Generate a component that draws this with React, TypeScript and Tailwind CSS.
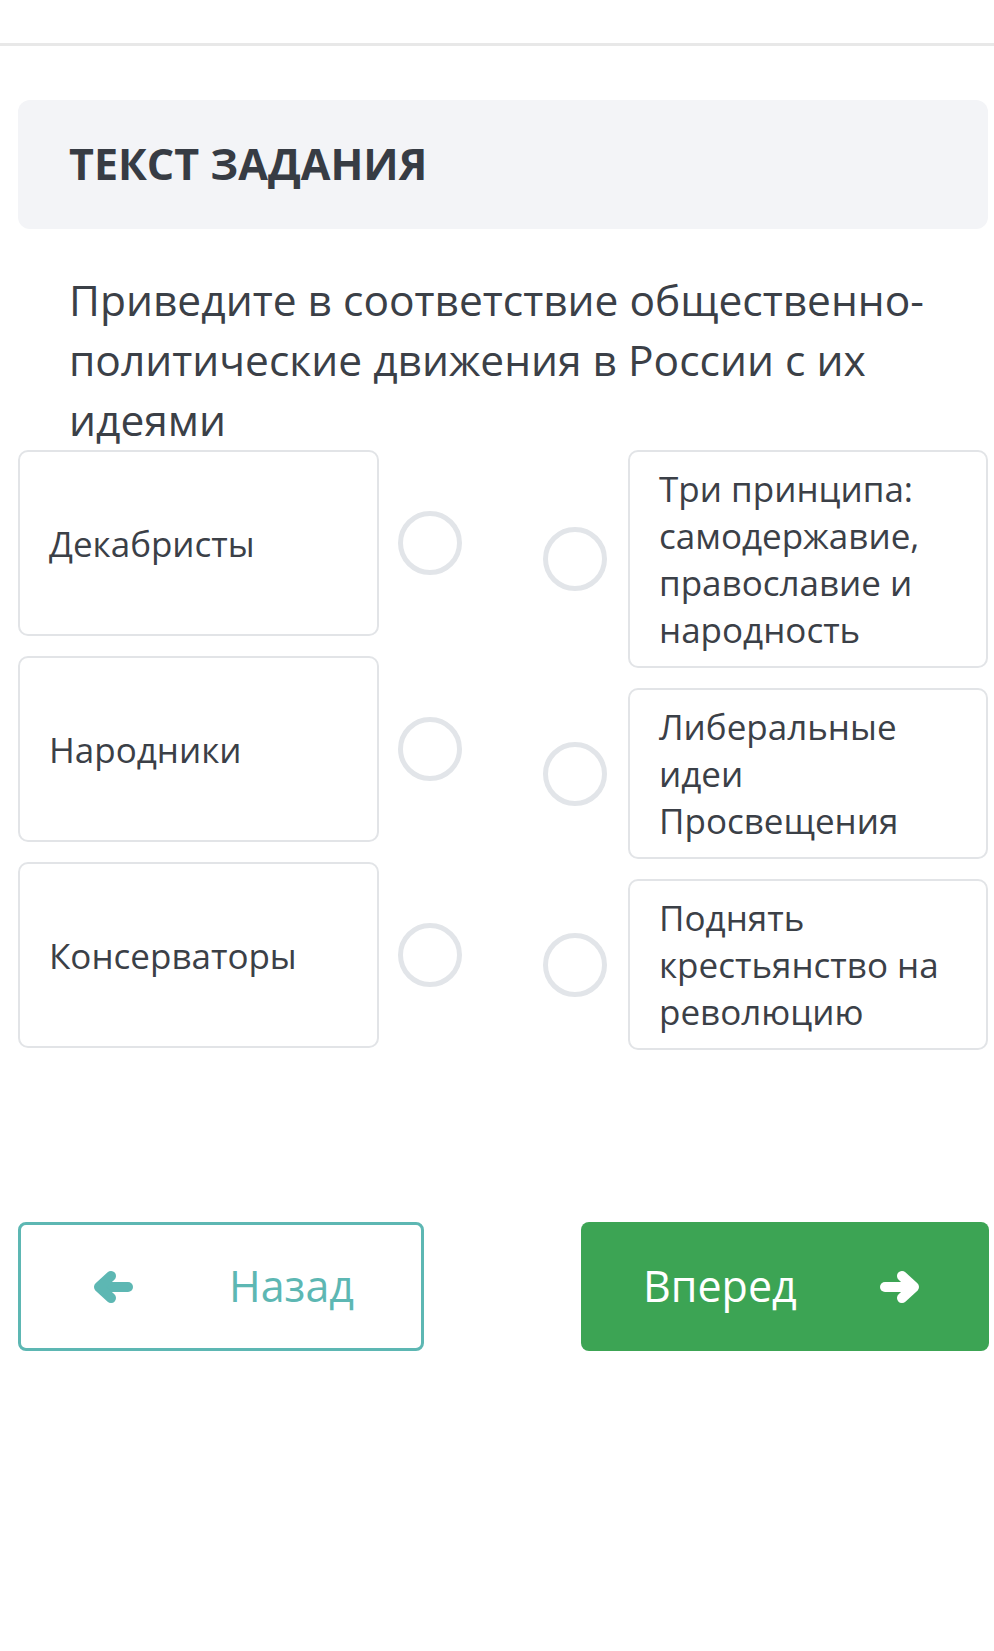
const left = ['Декабристы', 'Народники', 'Консерваторы'];

const right = [
  'Три принципа: самодержавие, православие и народность',
  'Либеральные идеи Просвещения',
  'Поднять крестьянство на революцию',
];

function Dot() {
  return <div className="h-[64px] w-[64px] shrink-0 rounded-full border-[5px] border-[#e2e5e9]" />;
}

// thick rounded arrow, points left unless flipped
function Arrow({ flip }: { flip?: boolean }) {
  return (
    <svg
      width="42"
      height="34"
      viewBox="0 0 42 34"
      fill="none"
      stroke="currentColor"
      strokeWidth="10"
      strokeLinecap="round"
      strokeLinejoin="round"
      className={flip ? '-scale-x-100' : ''}
    >
      <path d="M36 17H9" />
      <path d="M19 6L7 17L19 28" />
    </svg>
  );
}

export default function App() {
  return (
    <div className="min-h-[1651px] bg-white font-['Open_Sans',sans-serif] text-[#3b4047]">
      <div className="h-[46px] border-b-[3px] border-[#e8e8e8]" />

      <div className="px-[18px] pt-[54px]">
        {/* Header */}
        <div className="flex h-[129px] w-[970px] items-center rounded-xl bg-[#f3f4f7] px-[51px]">
          <h1 className="text-[43px] font-bold text-[#373c44]">ТЕКСТ ЗАДАНИЯ</h1>
        </div>

        {/* Question */}
        <p className="mt-[41px] px-[51px] text-[42.5px] leading-[60px]">
          Приведите в соответствие общественно-политические движения в России с их идеями
        </p>

        {/* Matching */}
        <div className="flex w-[970px] justify-between">
          <div className="flex flex-col gap-[20px]">
            {left.map((t) => (
              <div key={t} className="flex items-center gap-[19px]">
                <div className="flex h-[186px] w-[361px] items-center rounded-[10px] border-2 border-[#e2e4e7] px-[29px] text-[35px] leading-[47px]">
                  {t}
                </div>
                <Dot />
              </div>
            ))}
          </div>
          <div className="flex flex-col gap-[20px]">
            {right.map((t) => (
              <div key={t} className="flex items-center gap-[21px]">
                <Dot />
                <div className="w-[360px] rounded-[10px] border-2 border-[#e2e4e7] px-[29px] py-[13px] text-[35px] leading-[47px]">
                  {t}
                </div>
              </div>
            ))}
          </div>
        </div>

        {/* Buttons */}
        <div className="mt-[172px] flex w-[971px] justify-between">
          <button className="flex h-[129px] w-[406px] items-center rounded-lg border-[3px] border-[#5db7b3] pl-[71px] text-[43px] text-[#5db7b3]">
            <Arrow />
            <span className="ml-[95px]">Назад</span>
          </button>
          <button className="flex h-[129px] w-[408px] items-center rounded-lg bg-[#3ca454] pl-[62px] text-[43px] text-white">
            <span>Вперед</span>
            <span className="ml-[82px]">
              <Arrow flip />
            </span>
          </button>
        </div>
      </div>
    </div>
  );
}
